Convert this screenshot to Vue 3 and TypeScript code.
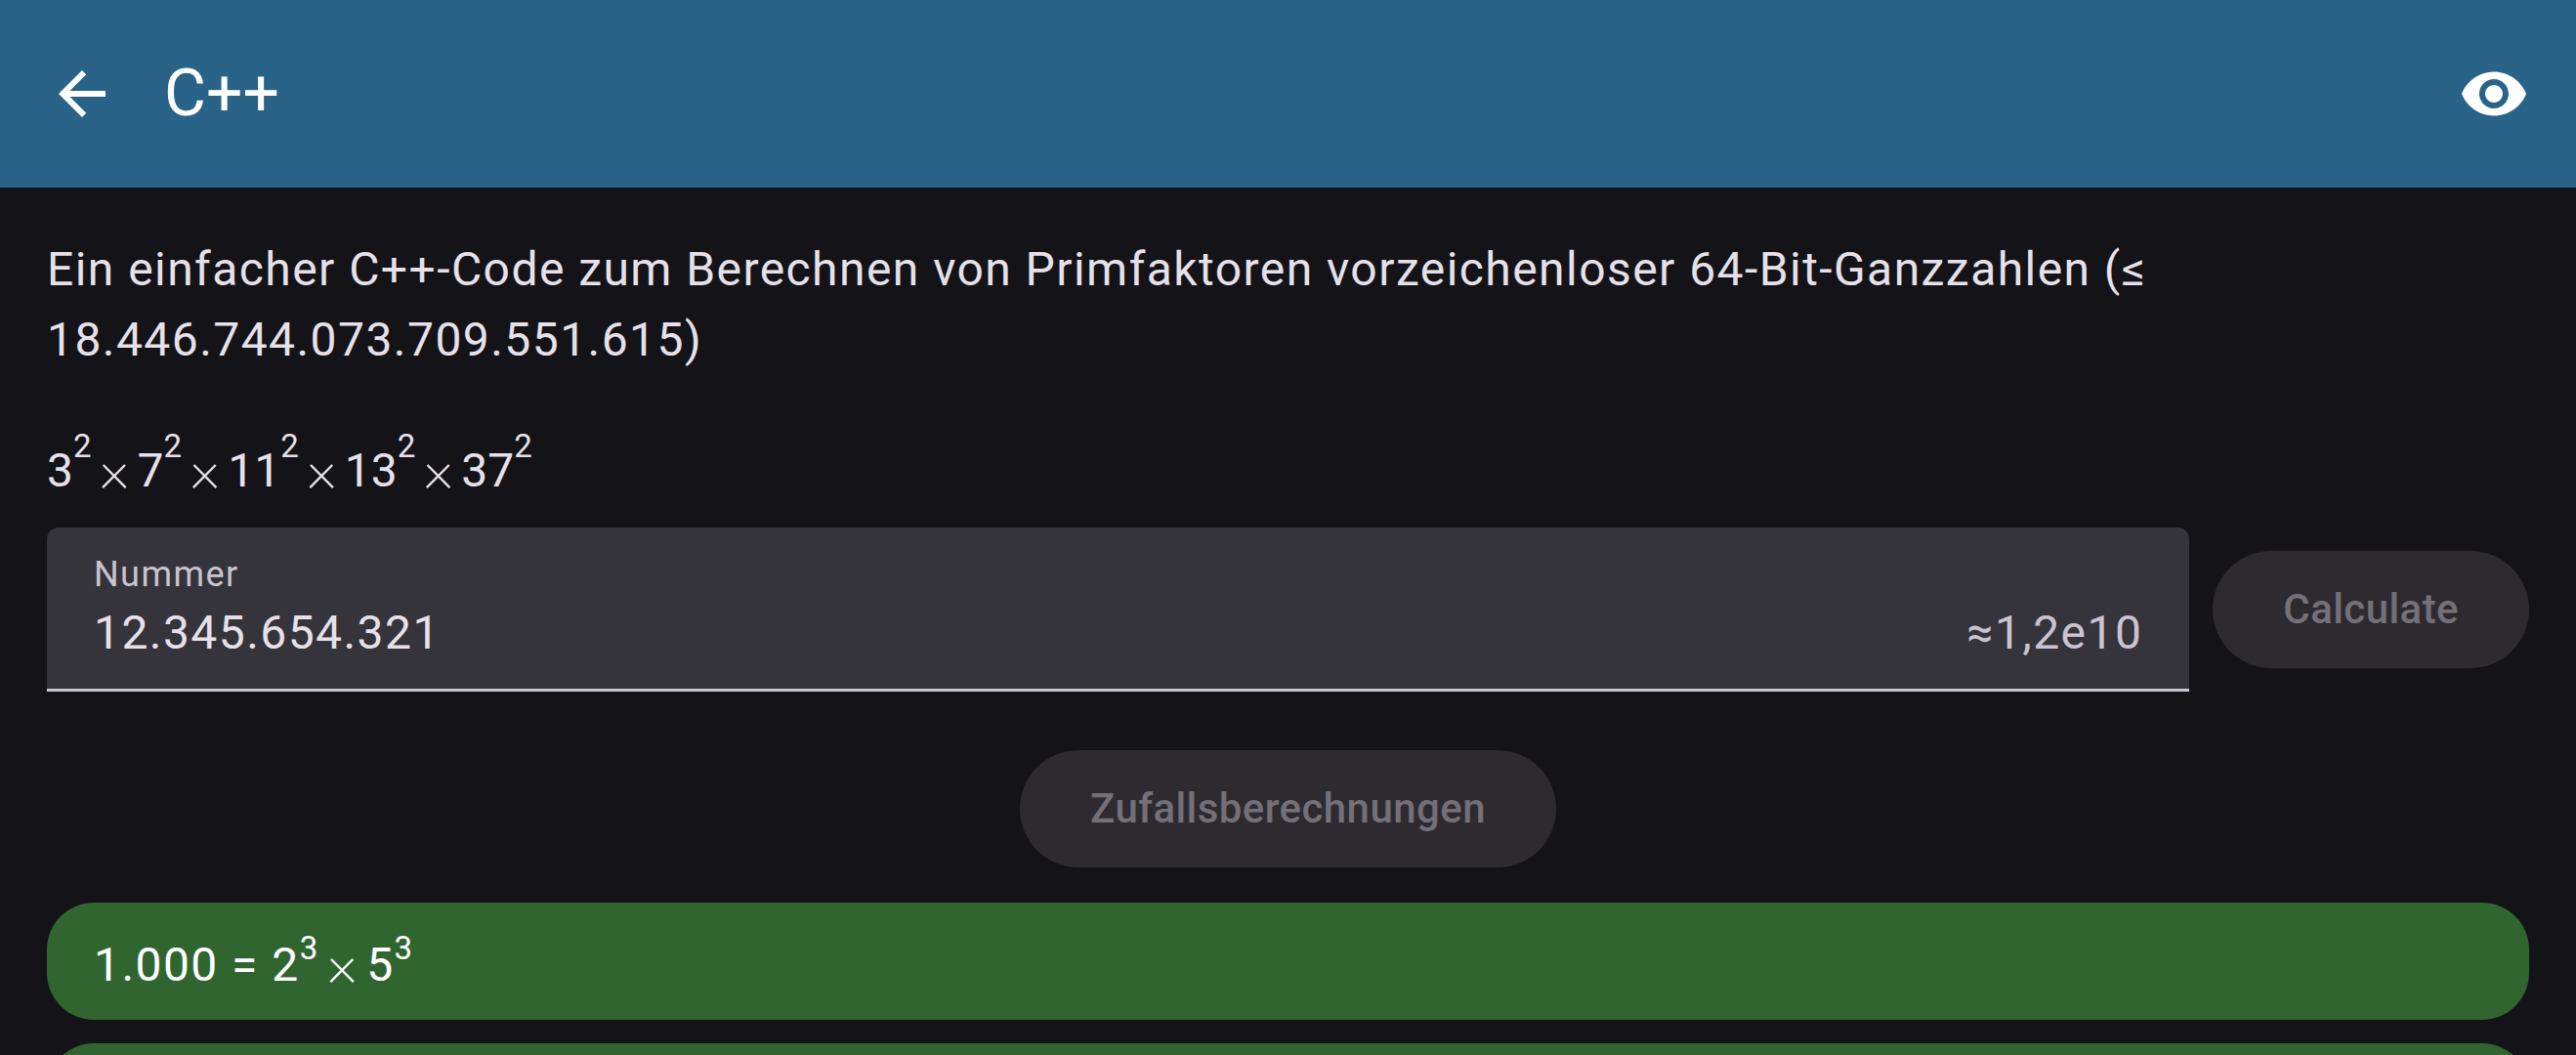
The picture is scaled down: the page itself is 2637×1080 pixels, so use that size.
<script setup lang="ts">
import { ref } from 'vue'

interface Factor {
  base: string
  exponent: number
}

interface Result {
  value: string
  factors: Factor[]
}

const value = ref('12.345.654.321')

const factors: Factor[] = [
  { base: '3', exponent: 2 },
  { base: '7', exponent: 2 },
  { base: '11', exponent: 2 },
  { base: '13', exponent: 2 },
  { base: '37', exponent: 2 },
]

const results: Result[] = [
  {
    value: '1.000',
    factors: [
      { base: '2', exponent: 3 },
      { base: '5', exponent: 3 },
    ],
  },
]
</script>

<template>
  <div class="page">
    <header class="bar">
      <button class="icon-button" type="button" aria-label="Zurück">
        <svg class="icon" viewBox="0 0 24 24" aria-hidden="true">
          <path d="M20 11H7.83l5.59-5.59L12 4l-8 8 8 8 1.41-1.41L7.83 13H20v-2z" />
        </svg>
      </button>
      <h1 class="title">C++</h1>
      <button class="icon-button" type="button" aria-label="Ansehen">
        <svg class="icon" viewBox="0 0 24 24" aria-hidden="true">
          <path
            d="M12 4.5C7 4.5 2.73 7.61 1 12c1.73 4.39 6 7.5 11 7.5s9.27-3.11 11-7.5c-1.73-4.39-6-7.5-11-7.5zM12 17c-2.76 0-5-2.24-5-5s2.24-5 5-5 5 2.24 5 5-2.24 5-5 5zm0-8c-1.66 0-3 1.34-3 3s1.34 3 3 3 3-1.34 3-3-1.34-3-3-3z"
          />
        </svg>
      </button>
    </header>

    <main class="content">
      <p class="description">
        Ein einfacher C++-Code zum Berechnen von Primfaktoren vorzeichenloser 64-Bit-Ganzzahlen (≤
        18.446.744.073.709.551.615)
      </p>

      <p class="factors">
        <template v-for="(factor, index) in factors" :key="factor.base">
          <span v-if="index > 0" class="times">×</span>{{ factor.base }}<sup>{{ factor.exponent }}</sup>
        </template>
      </p>

      <form class="entry" @submit.prevent>
        <div class="field">
          <label class="field-label" for="number">Nummer</label>
          <div class="field-row">
            <input id="number" v-model="value" class="field-input" type="text" inputmode="numeric" />
            <span class="field-suffix">≈1,2e10</span>
          </div>
        </div>
        <button class="pill" type="submit" disabled>Calculate</button>
      </form>

      <button class="pill random" type="button" disabled>Zufallsberechnungen</button>

      <ul class="results">
        <li v-for="result in results" :key="result.value" class="result">
          {{ result.value }} =
          <template v-for="(factor, index) in result.factors" :key="factor.base">
            <span v-if="index > 0" class="times">×</span>{{ factor.base }}<sup>{{ factor.exponent }}</sup>
          </template>
        </li>
        <li class="result"></li>
      </ul>
    </main>
  </div>
</template>

<style>
body {
  margin: 0;
  background: #141318;
}
</style>

<style scoped>
.page {
  --body-tracking: 0.03em;
  display: flex;
  flex-direction: column;
  height: 100vh;
  overflow: hidden;
  background: #141318;
  color: #e6e1e9;
  font-family: Roboto, "Liberation Sans", sans-serif;
  font-size: 48px;
  line-height: 72px;
}

.bar {
  display: flex;
  flex: none;
  align-items: center;
  gap: 48px;
  height: 192px;
  padding: 0 48px;
  box-sizing: border-box;
  background: #296488;
  color: #fff;
}

.title {
  flex: 1;
  margin: 0;
  font-size: 66px;
  font-weight: 400;
  line-height: 84px;
}

.icon-button {
  display: flex;
  padding: 0;
  border: 0;
  background: none;
  color: inherit;
}

.icon {
  width: 72px;
  height: 72px;
  fill: currentColor;
}

.content {
  padding: 48px 48px 0;
}

.description {
  margin: 0;
  letter-spacing: var(--body-tracking);
}

.factors {
  margin: 48px 0 8px;
  line-height: 100px;
}

sup {
  font-size: 33px;
  line-height: 0;
  vertical-align: 30px;
}

.times {
  margin: 0 8px;
  font-size: 60px;
  font-weight: 200;
  line-height: 0;
  vertical-align: -3px;
}

.entry {
  display: flex;
  align-items: center;
  gap: 24px;
}

.field {
  flex: 1;
  min-width: 0;
  padding: 24px 48px 21px;
  border-bottom: 3px solid #cac4d0;
  border-radius: 12px 12px 0 0;
  background: #36343b;
  letter-spacing: var(--body-tracking);
}

.field-label {
  display: block;
  color: #cac4d0;
  font-size: 36px;
  line-height: 48px;
}

.field-row {
  display: flex;
}

.field-input {
  flex: 1;
  min-width: 0;
  height: 72px;
  padding: 0;
  border: 0;
  outline: 0;
  background: none;
  color: inherit;
  font: inherit;
  letter-spacing: inherit;
}

.field-suffix {
  color: #cac4d0;
}

.pill {
  height: 120px;
  padding: 0 72px;
  border: 0;
  border-radius: 60px;
  background: #2e2b30;
  color: #737077;
  font: inherit;
  font-size: 42px;
  font-weight: 500;
  letter-spacing: 0.01em;
  line-height: 60px;
}

.random {
  display: block;
  margin: 60px auto 36px;
}

.results {
  display: flex;
  flex-direction: column;
  gap: 24px;
  margin: 0;
  padding: 0;
  list-style: none;
}

.result {
  height: 120px;
  padding: 8px 48px 0;
  box-sizing: border-box;
  border-radius: 48px;
  background: #316530;
  color: #fff;
  letter-spacing: var(--body-tracking);
  line-height: 112px;
}

.result sup {
  vertical-align: 22px;
}
</style>
